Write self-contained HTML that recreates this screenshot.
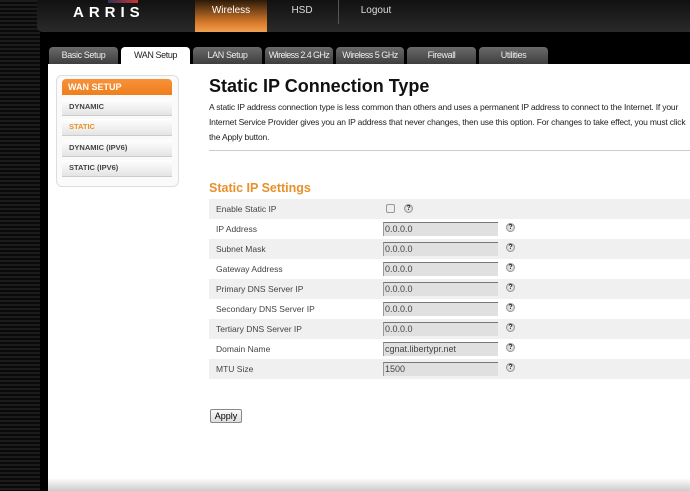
<!DOCTYPE html>
<html><head><style>
*{margin:0;padding:0;box-sizing:border-box}
body{width:690px;height:491px;overflow:hidden;background:#000;font-family:"Liberation Sans",Arial,sans-serif;position:relative}
.abs{position:absolute}
.stripes{left:0;top:0;width:40px;height:491px;background:repeating-linear-gradient(#1c1c1c 0 2px,#0a0a0a 2px 4px)}
.hdr{left:37px;top:0;width:653px;height:32px;background:linear-gradient(#111,#2a2a2a);border-bottom-left-radius:6px}
.logo{left:73px;top:4px;color:#fff;font-size:15px;font-weight:bold;letter-spacing:5px}
.nav{top:0;height:32px;color:#ddd;font-size:10px;text-align:center;line-height:22px}
.tab{top:47px;height:17px;background:linear-gradient(#6a6a6a,#3e3e3e);color:#eee;font-size:9px;text-align:center;line-height:17px;border-radius:4px 4px 0 0;letter-spacing:-0.4px;white-space:nowrap;overflow:hidden}
.main{left:48px;top:64px;width:642px;height:427px;background:#fff}
.foot{left:48px;top:478px;width:642px;height:13px;background:linear-gradient(#fff,#ccc)}
.side{left:56px;top:75px;width:123px;height:112px;border:1px solid #ddd;border-radius:6px;background:#fafafa}
.sh{left:62px;top:79px;width:110px;height:16px;background:linear-gradient(#f7923a,#ef7d1c);border-radius:4px 4px 0 0;color:#fff;font-weight:bold;font-size:9px;line-height:16px;padding-left:6px}
.si{left:62px;width:110px;height:17px;background:linear-gradient(#fff,#e4e4e4);border-bottom:1px solid #ccc;font-size:7.5px;font-weight:bold;color:#444;line-height:16px;padding-left:7px}
h1{position:absolute;left:209px;top:76px;font-size:18px;color:#111}
.p{left:209px;top:100px;width:481px;font-size:8.5px;line-height:15px;color:#222;letter-spacing:-0.18px}
hr{position:absolute;left:209px;top:150px;width:481px;border:0;border-top:1px solid #ccc}
h2{position:absolute;left:209px;top:181px;font-size:12.5px;color:#e8912a}
.row{left:209px;width:481px;height:20px;font-size:8.5px;color:#444;line-height:20px;padding-left:7px}
.g{background:#f0f0f0}
.in{left:383px;width:115px;height:14px;background:#e0e0e0;border-top:1px solid #777;border-left:1px solid #999;font-size:9px;color:#444;line-height:13px;padding-left:1px}
.q{width:9px;height:9px;border-radius:50%;background:radial-gradient(#fff,#bbb);border:1px solid #999;font-size:7px;font-weight:bold;text-align:center;line-height:8px;color:#222}
</style></head><body>
<div class="abs stripes"></div>
<div class="abs hdr"></div>
<div class="abs logo">ARRIS</div>
<div class="abs" style="left:108px;top:0;width:30px;height:3px;background:linear-gradient(90deg,#335,#c33)"></div>
<div class="abs nav" style="left:195px;width:72px;background:linear-gradient(#2a1a0a,#d77a2a 70%,#f0a050);color:#fff">Wireless</div>
<div class="abs nav" style="left:267px;width:70px">HSD</div>
<div class="abs" style="left:338px;top:0;width:1px;height:24px;background:#555"></div>
<div class="abs nav" style="left:340px;width:72px">Logout</div>
<div class="abs tab" style="left:49px;width:69px">Basic Setup</div>
<div class="abs tab" style="left:121px;width:69px;background:#fff;color:#222">WAN Setup</div>
<div class="abs tab" style="left:193px;width:69px">LAN Setup</div>
<div class="abs tab" style="left:265px;width:68px;letter-spacing:-0.6px">Wireless 2.4 GHz</div>
<div class="abs tab" style="left:336px;width:68px;letter-spacing:-0.5px">Wireless 5 GHz</div>
<div class="abs tab" style="left:407px;width:69px">Firewall</div>
<div class="abs tab" style="left:479px;width:69px">Utilities</div>
<div class="abs main"></div>
<div class="abs foot"></div>
<div class="abs side"></div>
<div class="abs sh">WAN SETUP</div>
<div class="abs si" style="top:99px">DYNAMIC</div>
<div class="abs si" style="top:119px;color:#e8912a">STATIC</div>
<div class="abs si" style="top:140px">DYNAMIC (IPV6)</div>
<div class="abs si" style="top:160px">STATIC (IPV6)</div>
<h1>Static IP Connection Type</h1>
<div class="abs p">A static IP address connection type is less common than others and uses a permanent IP address to connect to the Internet. If your Internet Service Provider gives you an IP address that never changes, then use this option. For changes to take effect, you must click the Apply button.</div>
<hr>
<h2>Static IP Settings</h2>
<div class="abs row g" style="top:199px">Enable Static IP</div>
<div class="abs" style="left:386px;top:204px;width:9px;height:9px;border:1px solid #999;background:#eee;border-radius:2px"></div>
<div class="abs q" style="left:404px;top:204px">?</div>
<div class="abs row" style="top:219px">IP Address</div>
<div class="abs row g" style="top:239px">Subnet Mask</div>
<div class="abs row" style="top:259px">Gateway Address</div>
<div class="abs row g" style="top:279px">Primary DNS Server IP</div>
<div class="abs row" style="top:299px">Secondary DNS Server IP</div>
<div class="abs row g" style="top:319px">Tertiary DNS Server IP</div>
<div class="abs row" style="top:339px">Domain Name</div>
<div class="abs row g" style="top:359px">MTU Size</div>
<div class="abs in" style="top:222px">0.0.0.0</div><div class="abs q" style="left:506px;top:223px">?</div>
<div class="abs in" style="top:242px">0.0.0.0</div><div class="abs q" style="left:506px;top:243px">?</div>
<div class="abs in" style="top:262px">0.0.0.0</div><div class="abs q" style="left:506px;top:263px">?</div>
<div class="abs in" style="top:282px">0.0.0.0</div><div class="abs q" style="left:506px;top:283px">?</div>
<div class="abs in" style="top:302px">0.0.0.0</div><div class="abs q" style="left:506px;top:303px">?</div>
<div class="abs in" style="top:322px">0.0.0.0</div><div class="abs q" style="left:506px;top:323px">?</div>
<div class="abs in" style="top:342px">cgnat.libertypr.net</div><div class="abs q" style="left:506px;top:343px">?</div>
<div class="abs in" style="top:362px">1500</div><div class="abs q" style="left:506px;top:363px">?</div>
<div class="abs" style="left:210px;top:409px;width:32px;height:14px;border:1px solid #888;background:linear-gradient(#fafafa,#ddd);border-radius:2px;font-size:9px;text-align:center;line-height:12px">Apply</div>
</body></html>
